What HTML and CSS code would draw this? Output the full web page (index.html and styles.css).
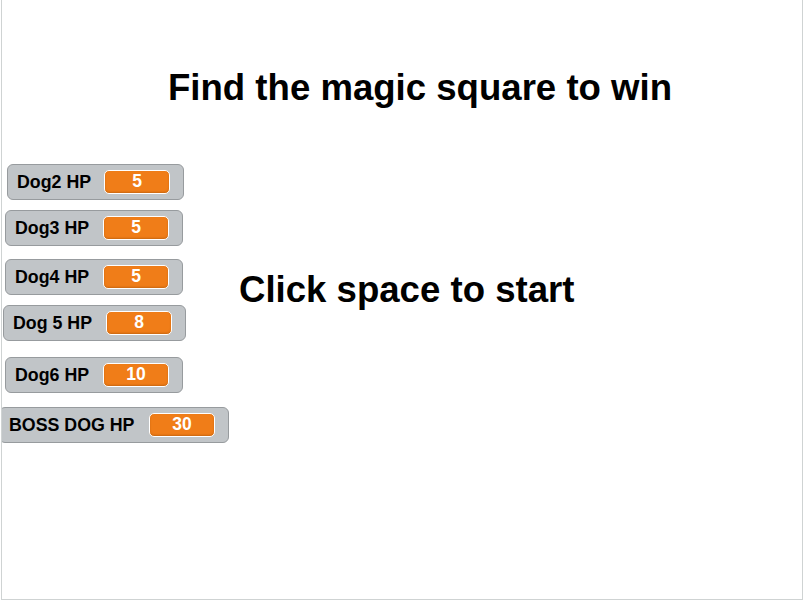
FILE: index.html
```html
<!DOCTYPE html>
<html>
<head>
<meta charset="utf-8">
<link rel="stylesheet" href="styles.css">
</head>
<body>
<div class="stage">
  <div class="say title">Find the magic square to win</div>
  <div class="say start">Click space to start</div>

  <div class="monitor m1"><span class="label">Dog2 HP</span><span class="value">5</span></div>
  <div class="monitor m2"><span class="label">Dog3 HP</span><span class="value">5</span></div>
  <div class="monitor m3"><span class="label">Dog4 HP</span><span class="value">5</span></div>
  <div class="monitor m4"><span class="label">Dog 5 HP</span><span class="value">8</span></div>
  <div class="monitor m5"><span class="label">Dog6 HP</span><span class="value">10</span></div>
  <div class="monitor m6"><span class="label">BOSS DOG HP</span><span class="value">30</span></div>
</div>
</body>
</html>
```
FILE: styles.css
```css
html, body {
  margin: 0;
  padding: 0;
  background: #ffffff;
}

.stage {
  position: relative;
  margin-left: 1px;
  width: 800px;
  height: 599px;
  border-left: 1px solid #cfd3d3;
  border-right: 1px solid #cfd3d3;
  border-bottom: 1px solid #cfd3d3;
  background: #ffffff;
  overflow: hidden;
  font-family: "Liberation Sans", Arial, sans-serif;
}

.say {
  position: absolute;
  font-weight: bold;
  font-size: 36.6px;
  line-height: 36px;
  color: #000000;
  white-space: nowrap;
}

.title { left: 166px; top: 70px; }
.start { left: 237px; top: 272px; }

.monitor {
  position: absolute;
  box-sizing: border-box;
  height: 36px;
  display: flex;
  align-items: center;
  gap: 13px;
  padding: 0 13px 0 9px;
  background: #c1c5c8;
  border: 1px solid #979b9e;
  border-radius: 6px;
}

.label {
  font-weight: bold;
  font-size: 17.8px;
  color: #000000;
  white-space: nowrap;
  flex: 1;
}

.value {
  box-sizing: border-box;
  width: 66px;
  height: 24px;
  margin-top: -1px;
  display: flex;
  align-items: center;
  justify-content: center;
  background: #f07d18;
  border: 1px solid #ffffff;
  border-radius: 5px;
  box-shadow: inset 0 -1px 2px rgba(120, 60, 0, 0.35);
  color: #ffffff;
  font-weight: bold;
  font-size: 17.5px;
}

.m1 { left: 5px; top: 164px; width: 177px; }
.m2 { left: 3px; top: 210px; width: 178px; }
.m3 { left: 3px; top: 259px; width: 178px; }
.m4 { left: 1px; top: 305px; width: 183px; }
.m5 { left: 3px; top: 357px; width: 178px; }
.m6 { left: -3px; top: 407px; width: 230px; }
```
